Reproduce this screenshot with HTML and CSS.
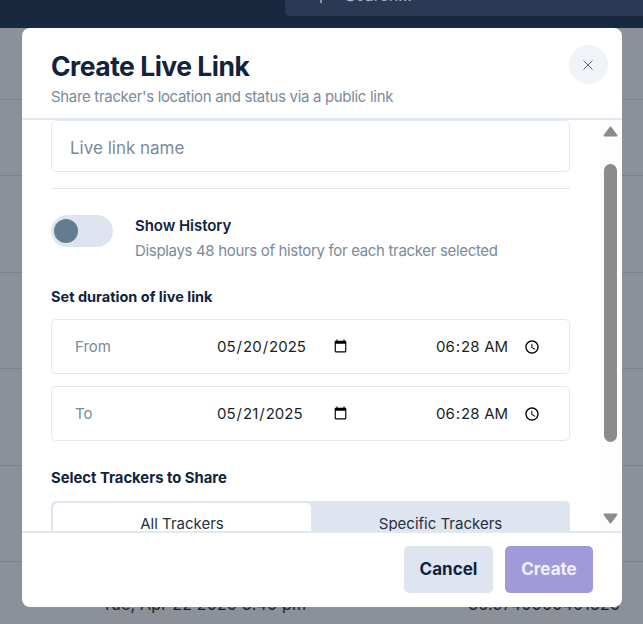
FILE: index.html

```html
<!DOCTYPE html>
<html lang="en">
<head>
  <meta charset="UTF-8">
  <meta name="viewport" content="width=device-width, initial-scale=1.0">
  <title>Create Live Link</title>
  <link rel="stylesheet" href="styles.css">
</head>
<body>
  <div class="topbar">
    <div class="search">
      <svg class="search-icon" width="14" height="14" viewBox="0 0 14 14"><path d="M6 0v3" stroke="#a9b3c2" stroke-width="1.5"/></svg>
      <span class="search-text">Search...</span>
    </div>
  </div>

  <div class="rows">
    <div class="row row-first"></div>
    <div class="row row-short"></div>
    <div class="row"></div>
    <div class="row"></div>
    <div class="row"></div>
    <div class="row"></div>
    <div class="row-last">
      <span>Tue, Apr 22 2025 3:40 pm</span>
      <span>36.9740000401325</span>
    </div>
  </div>

  <div class="modal">
    <div class="modal-header">
      <div>
        <h1>Create Live Link</h1>
        <p>Share tracker's location and status via a public link</p>
      </div>
      <button class="close" type="button">
        <svg width="10" height="10" viewBox="0 0 10 10"><path d="M0.5 0.5l9 9M9.5 0.5l-9 9" stroke="#5b6878" stroke-width="1" fill="none"/></svg>
      </button>
    </div>

    <div class="modal-body">
      <div class="content">
        <input class="name-input" type="text" placeholder="Live link name">
        <hr class="divider">

        <div class="history">
          <div class="toggle"><span class="knob"></span></div>
          <div>
            <div class="history-title">Show History</div>
            <div class="history-text">Displays 48 hours of history for each tracker selected</div>
          </div>
        </div>

        <h2 class="label-duration">Set duration of live link</h2>
        <div class="date-row">
          <span class="date-label">From</span>
          <input class="date-input" type="date" value="2025-05-20">
          <input class="time-input" type="time" value="06:28">
        </div>
        <div class="date-row">
          <span class="date-label">To</span>
          <input class="date-input" type="date" value="2025-05-21">
          <input class="time-input" type="time" value="06:28">
        </div>

        <h2 class="label-trackers">Select Trackers to Share</h2>
        <div class="tabs">
          <div class="tab tab-active">All Trackers</div>
          <div class="tab">Specific Trackers</div>
        </div>
      </div>

      <div class="scrollbar">
        <svg class="arrow" width="15" height="11" viewBox="0 0 15 11"><path d="M7.5 1.5L13.5 9.5H1.5Z" fill="#8b8b8b" stroke="#8b8b8b" stroke-width="2" stroke-linejoin="round"/></svg>
        <span class="thumb"></span>
        <svg class="arrow arrow-down" width="15" height="11" viewBox="0 0 15 11"><path d="M7.5 9.5L13.5 1.5H1.5Z" fill="#8b8b8b" stroke="#8b8b8b" stroke-width="2" stroke-linejoin="round"/></svg>
      </div>
    </div>

    <div class="modal-footer">
      <button class="btn btn-cancel" type="button">Cancel</button>
      <button class="btn btn-create" type="button">Create</button>
    </div>
  </div>
</body>
</html>
```

FILE: styles.css

```css
* {
  box-sizing: border-box;
}
html, body {
  height: 100%;
}
body {
  margin: 0;
  overflow: hidden;
  font-family: Inter, "Liberation Sans", sans-serif;
  background: #8b9099;
  color: #12233d;
}

/* page behind the overlay */
.topbar {
  height: 28px;
  background: #18283f;
  padding-left: 285px;
}
.search {
  height: 16px;
  background: #2a3a55;
  border-radius: 0 0 0 5px;
  display: flex;
  overflow: hidden;
  padding-left: 30px;
  gap: 16px;
}
.search-icon {
  flex: none;
}
.search-text {
  font-size: 16px;
  line-height: 16px;
  color: #a9b3c2;
  margin-top: -13px;
}
.row {
  height: 96.5px;
  border-bottom: 1px solid #7d828c;
}
.row-first {
  height: 72px;
}
.row-short {
  height: 76px;
}
.row-last {
  display: flex;
  justify-content: space-between;
  padding: 32px 23px 0 102px;
  font-size: 16px;
  line-height: 20px;
  letter-spacing: 0.2px;
  color: #1b1f27;
}

/* modal */
.modal {
  position: absolute;
  left: 22px;
  top: 28px;
  width: 600px;
  height: 579px;
  background: #fff;
  border-radius: 8px;
  display: flex;
  flex-direction: column;
  overflow: hidden;
}
.modal-header {
  height: 92px;
  flex: none;
  display: flex;
  justify-content: space-between;
  align-items: flex-start;
  padding: 17px 14px 0 29px;
  border-bottom: 2px solid #e2e8f0;
}
h1 {
  margin: 0;
  padding-top: 1px;
  font-size: 26.5px;
  line-height: 40px;
  font-weight: 700;
  letter-spacing: -0.5px;
}
.modal-header p {
  margin: 0;
  font-size: 15px;
  line-height: 22px;
  letter-spacing: -0.32px;
  color: #7b8a9b;
}
.close {
  width: 39px;
  height: 39px;
  border: none;
  border-radius: 50%;
  background: #f0f3f8;
  display: flex;
  align-items: center;
  justify-content: center;
  padding: 0 1px 0 0;
}

.modal-body {
  flex: 1;
  min-height: 0;
  display: flex;
  overflow: hidden;
}
.content {
  width: 578px;
  flex: none;
  padding: 0 30px 0 29px;
  overflow: hidden;
}
.name-input {
  display: block;
  width: 100%;
  height: 52px;
  border: 1px solid #e2e8f0;
  border-radius: 5px;
  padding: 3px 18px 0;
  font-family: inherit;
  font-size: 17px;
  outline: none;
}
.name-input::placeholder {
  color: #7b8a9b;
  opacity: 1;
}
.divider {
  border: none;
  border-top: 1px solid #e2e8f0;
  margin: 16px 0 0;
}

.history {
  display: flex;
  gap: 22px;
  margin-top: 26px;
}
.toggle {
  width: 62px;
  height: 32px;
  flex: none;
  border-radius: 16px;
  background: #dde3ef;
  padding: 4px 3px;
}
.knob {
  display: block;
  width: 24px;
  height: 24px;
  border-radius: 50%;
  background: #647c92;
}
.history-title {
  font-size: 15px;
  line-height: 22px;
  font-weight: 600;
  letter-spacing: -0.05px;
}
.history-text {
  font-size: 15px;
  line-height: 28px;
  letter-spacing: -0.33px;
  color: #7b8a9b;
}

h2 {
  margin: 0;
  line-height: 20px;
  font-weight: 700;
}
.label-duration {
  font-size: 14.5px;
  margin-top: 22px;
  margin-bottom: 12px;
}
.label-trackers {
  font-size: 14.8px;
  margin-top: 27px;
  margin-bottom: 13px;
}
.date-row {
  height: 55px;
  margin-bottom: 12px;
  border: 1px solid #e2e8f0;
  border-radius: 5px;
  display: flex;
  align-items: center;
  padding-left: 23px;
}
.date-row:last-of-type {
  margin-bottom: 0;
}
.date-label {
  width: 141px;
  flex: none;
  font-size: 15px;
  color: #7b8a9b;
}
.date-input, .time-input {
  border: none;
  background: transparent;
  padding: 0;
  font-family: inherit;
  font-size: 15px;
  color: #1b1f27;
  outline: none;
}
.date-input {
  width: 134px;
  margin-right: 85px;
}
.time-input {
  width: 105px;
}
.time-input::-webkit-calendar-picker-indicator {
  width: 16px;
  height: 16px;
  padding: 0;
  margin-left: 14px;
}

.tabs {
  display: flex;
  height: 40px;
  background: #dfe5f0;
  border-radius: 5px;
  padding: 2px 0 0 2px;
}
.tab {
  flex: 1;
  text-align: center;
  font-size: 15px;
  line-height: 42px;
  color: #27303f;
}
.tab-active {
  flex: none;
  width: 258px;
  background: #fff;
  border-radius: 5px 5px 0 0;
}

/* fake scrollbar, same grey as the native one */
.scrollbar {
  width: 22px;
  flex: none;
  background: #fdfdfd;
  display: flex;
  flex-direction: column;
  align-items: center;
  padding: 6px 1px 0 0;
}
.arrow {
  flex: none;
}
.arrow-down {
  margin-top: 71px;
}
.thumb {
  width: 13px;
  height: 278px;
  margin-top: 27px;
  border-radius: 7px;
  background: #8b8b8b;
}

.modal-footer {
  height: 76px;
  flex: none;
  border-top: 2px solid #e2e8f0;
  display: flex;
  justify-content: flex-end;
  gap: 12px;
  padding: 13px 29px 0 0;
}
.btn {
  height: 47px;
  border: none;
  border-radius: 5px;
  padding: 0 0 2px;
  font-family: inherit;
  font-size: 17px;
  font-weight: 700;
}
.btn-cancel {
  width: 89px;
  background: #dfe5f0;
  color: #12233d;
}
.btn-create {
  width: 88px;
  background: #a09bd8;
  color: #f2f1fb;
}
```
